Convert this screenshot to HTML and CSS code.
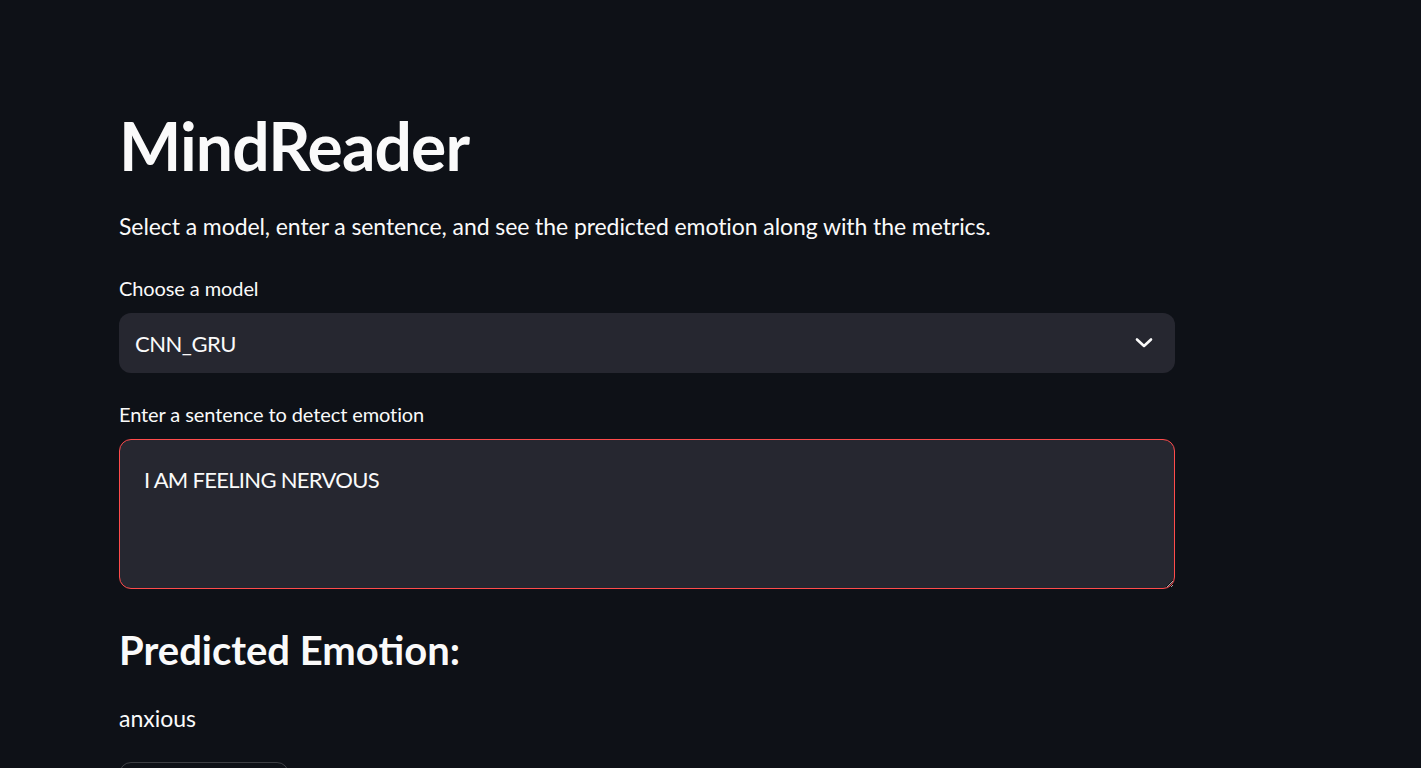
FILE: index.html
```html
<!DOCTYPE html>
<html lang="en">
<head>
<meta charset="utf-8">
<title>MindReader</title>
<link rel="stylesheet" href="styles.css">
</head>
<body>
<main class="main">
  <h1 class="title">MindReader</h1>
  <p class="intro">Select a model, enter a sentence, and see the predicted emotion along with the metrics.</p>

  <div class="field">
    <label class="label">Choose a model</label>
    <div class="select">
      <span class="select-value">CNN_GRU</span>
      <svg class="chevron" width="18" height="12" viewBox="0 0 18 12"><polyline points="2,2.5 9,9 16,2.5" fill="none" stroke="#fafafa" stroke-width="2.6" stroke-linecap="round" stroke-linejoin="round"/></svg>
    </div>
  </div>

  <div class="field field-text">
    <label class="label">Enter a sentence to detect emotion</label>
    <textarea class="textarea" readonly>I AM FEELING NERVOUS</textarea>
  </div>

  <h2 class="subheader">Predicted Emotion:</h2>
  <p class="result">anxious</p>

  <button class="btn" aria-label="Show metrics"></button>
</main>
</body>
</html>
```

FILE: styles.css
```css
html, body {
  margin: 0;
  padding: 0;
  background: #0e1117;
  color: #fafafa;
  color-scheme: dark;
  font-family: "Source Sans Pro", Lato, "Noto Sans", sans-serif;
  overflow: hidden;
}

.main {
  width: 1056px;
  padding: 106px 0 0 119px;
  display: flex;
  flex-direction: column;
  align-items: flex-start;
}

.title {
  margin: 0;
  font-size: 66px;
  font-weight: 700;
  line-height: 79px;
  letter-spacing: -0.9px;
}

.intro {
  margin: 22px 0 0;
  font-size: 23px;
  line-height: 38px;
  letter-spacing: -0.08px;
}

.field {
  width: 100%;
  margin-top: 26px;
  display: flex;
  flex-direction: column;
  gap: 8px;
}

.field-text {
  margin-top: 24px;
}

.label {
  font-size: 20px;
  line-height: 34px;
  letter-spacing: -0.1px;
}

.select {
  height: 60px;
  background: #262730;
  border-radius: 12px;
  display: flex;
  align-items: center;
  justify-content: space-between;
  padding: 0 22px 0 16px;
  box-sizing: border-box;
}

.select-value {
  font-size: 22px;
  letter-spacing: -0.5px;
}

.chevron {
  display: block;
}

.textarea {
  box-sizing: border-box;
  width: 100%;
  height: 150px;
  margin: 0;
  background: #262730;
  color: #fafafa;
  border: 1px solid #ff4b4b;
  border-radius: 12px;
  padding: 21px 24px;
  font-family: inherit;
  font-size: 22px;
  line-height: 38px;
  letter-spacing: -0.7px;
  resize: vertical;
  outline: none;
}

.subheader {
  margin: 36px 0 0;
  font-size: 40px;
  font-weight: 700;
  line-height: 50px;
}

.result {
  margin: 24px 0 0;
  font-size: 23px;
  line-height: 38px;
}

.btn {
  margin-top: 25px;
  width: 170px;
  height: 58px;
  background: transparent;
  border: 1px solid rgba(250, 250, 250, 0.2);
  border-radius: 12px;
}
```
